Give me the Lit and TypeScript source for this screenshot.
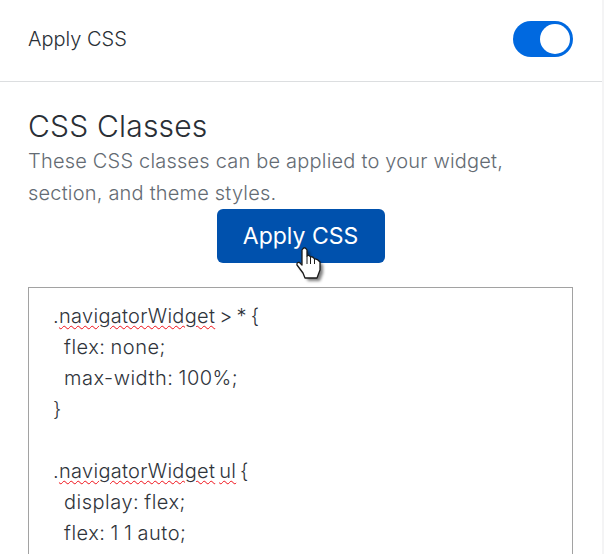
import { LitElement, html, css } from "lit";
import { customElement } from "lit/decorators.js";

@customElement("app-root")
export class AppRoot extends LitElement {
  static styles = css`
    :host {
      display: block;
      width: 604px;
      height: 554px;
      overflow: hidden;
      background: #fff;
      font-family: Inter, "Noto Sans", sans-serif;
      font-weight: 300;
      color: #2a2f36;
      position: relative;
    }
    .panel {
      width: 602px;
      height: 554px;
      border-right: 2px solid #f4f4f5;
      overflow: hidden;
    }
    .top {
      height: 82px;
      box-sizing: border-box;
      padding: 0 29px 4px 28px;
      display: flex;
      align-items: center;
      justify-content: space-between;
      border-bottom: 1px solid #dcdee0;
      font-size: 20px;
    }
    .toggle {
      width: 60px;
      height: 36px;
      box-sizing: border-box;
      border-radius: 18px;
      background: #0069e0;
      padding: 3px;
      display: flex;
      justify-content: flex-end;
    }
    .knob {
      width: 30px;
      height: 30px;
      border-radius: 50%;
      background: #fff;
    }
    .body {
      padding: 26px 29px 0 28px;
    }
    h2 {
      margin: 0;
      font-size: 30px;
      font-weight: 300;
      line-height: 37px;
      letter-spacing: 0.2px;
    }
    p {
      margin: 0;
      font-size: 20px;
      line-height: 32px;
      letter-spacing: 0.2px;
      color: #646b73;
    }
    .btnrow {
      display: flex;
      justify-content: center;
    }
    .btn {
      width: 168px;
      height: 54px;
      border-radius: 6px;
      background: #0051ad;
      color: #fff;
      font-weight: 400;
      display: flex;
      align-items: center;
      justify-content: center;
      font-size: 23px;
    }
    .code {
      margin-top: 24px;
      border: 1px solid #a2a2a2;
      height: 300px;
      box-sizing: border-box;
      padding: 13px 24px;
      font-size: 20px;
      line-height: 31px;
      letter-spacing: 0.3px;
      word-spacing: -2px;
      color: #2f343b;
    }
    .line {
      height: 31px;
      white-space: nowrap;
    }
    .ind {
      padding-left: 11px;
      letter-spacing: 0.5px;
      word-spacing: -1px;
    }
    .sq {
      text-decoration: underline wavy #f01018 1.2px;
      text-underline-offset: 2px;
    }
    .cursor {
      position: absolute;
      left: 295px;
      top: 245px;
      width: 32px;
      height: 42px;
    }
  `;

  render() {
    return html`
      <div class="panel">
        <div class="top">
          <span>Apply CSS</span>
          <div class="toggle"><div class="knob"></div></div>
        </div>
        <div class="body">
          <h2>CSS Classes</h2>
          <p>These CSS classes can be applied to your widget,<br />section, and theme styles.</p>
          <div class="btnrow"><div class="btn">Apply CSS</div></div>
          <div class="code">
            <div class="line">.<span class="sq">navigatorWidget</span> &gt; * {</div>
            <div class="line ind">flex: none;</div>
            <div class="line ind">max-width: 100%;</div>
            <div class="line">}</div>
            <div class="line"></div>
            <div class="line">.<span class="sq">navigatorWidget</span> <span class="sq">ul</span> {</div>
            <div class="line ind">display: flex;</div>
            <div class="line ind">flex: 1 1 auto;</div>
          </div>
        </div>
      </div>
      <svg class="cursor" viewBox="0 0 32 42">
        <defs>
          <filter id="s" x="-30%" y="-30%" width="170%" height="170%">
            <feGaussianBlur stdDeviation="1.6" />
          </filter>
        </defs>
        <path d="M7 5 Q9.500 0.500 12 5 L12 11 Q14 9.500 15.500 12 Q18 11 19.500 14 Q22 13.500 25 17 L25 25 L22 33 L10 33 L8 28 L2 20 Q1.500 17 4.500 17.500 L7 20 Z" fill="#000" opacity=".5" filter="url(#s)" transform="translate(3 3)" />
        <path d="M7 5 Q9.500 0.500 12 5 L12 11 Q14 9.500 15.500 12 Q18 11 19.500 14 Q22 13.500 25 17 L25 25 L22 33 L10 33 L8 28 L2 20 Q1.500 17 4.500 17.500 L7 20 Z" fill="#fff" stroke="#1a1a1a" stroke-width="1.300" stroke-linejoin="round" />
        <path d="M12 11 V19 M15.500 12 V19 M19.500 14 V19" stroke="#1a1a1a" stroke-width="1" fill="none" />
      </svg>
    `;
  }
}
